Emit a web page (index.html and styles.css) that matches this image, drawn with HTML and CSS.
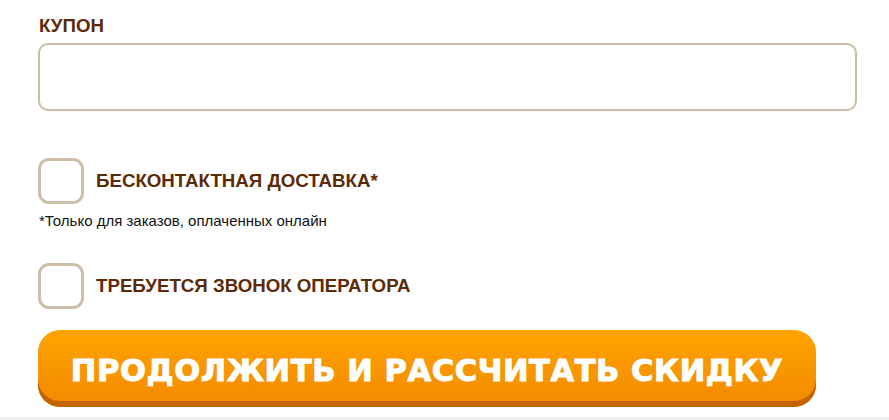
FILE: index.html
```html
<html>
    <head>
        <meta charset="UTF-8">
        <title>Оформление заказа</title>
        <link rel="stylesheet" href="styles.css">
    </head>
    <body>
        <form class="order">
            <label class="field-title" for="coupon">КУПОН</label>
            <input type="text" id="coupon" class="text-input">

            <label class="check first">
                <input type="checkbox">
                <span class="box"></span>
                <span class="check-label">БЕСКОНТАКТНАЯ ДОСТАВКА*</span>
            </label>
            <p class="note">*Только для заказов, оплаченных онлайн</p>

            <label class="check">
                <input type="checkbox">
                <span class="box"></span>
                <span class="check-label">ТРЕБУЕТСЯ ЗВОНОК ОПЕРАТОРА</span>
            </label>

            <button type="button" class="submit">ПРОДОЛЖИТЬ И РАССЧИТАТЬ СКИДКУ</button>
        </form>
        <div class="footer-strip"></div>
    </body>
</html>
```

FILE: styles.css
```css
body {
    margin: 0;
    background-color: white;
    font-family: "Liberation Sans", Arial, sans-serif;
}

.order {
    display: flex;
    flex-direction: column;
    align-items: flex-start;
    width: 819px;
    margin: 0;
    padding: 15px 0 0 38px;
}

.field-title {
    font-size: 18.7px;
    line-height: 21px;
    font-weight: bold;
    color: #5b2a06;
    padding-left: 1px;
}

.text-input {
    box-sizing: border-box;
    width: 819px;
    height: 68px;
    margin-top: 7px;
    border: 2px solid #cbbba7;
    border-radius: 10px;
    background: white;
    outline: none;
}

.check {
    display: flex;
    align-items: center;
    gap: 12px;
    cursor: pointer;
}

.check.first { margin-top: 47px; }

.check input { display: none; }

.box {
    box-sizing: border-box;
    width: 46px;
    height: 46px;
    border: 3px solid #cdbda9;
    border-radius: 11px;
    background: white;
}

.check-label {
    font-size: 18.7px;
    font-weight: bold;
    color: #5b2a06;
}

.note {
    margin: 8px 0 34px 1px;
    font-size: 15px;
    line-height: 17px;
    color: #111;
}

.submit {
    box-sizing: border-box;
    width: 778px;
    height: 77px;
    margin-top: 21px;
    padding: 3px 0 0;
    border: none;
    border-radius: 22px;
    background: linear-gradient(#ffa400, #f28900);
    box-shadow: inset 0 -6px 0 #c46400;
    color: white;
    font-family: "DejaVu Sans", sans-serif;
    font-weight: bold;
    font-size: 30.5px;
    letter-spacing: 0.6px;
    -webkit-text-stroke: 1px white;
    text-align: center;
}

.footer-strip {
    margin-top: 10px;
    height: 10px;
    background: #f1f1f1;
}
```
